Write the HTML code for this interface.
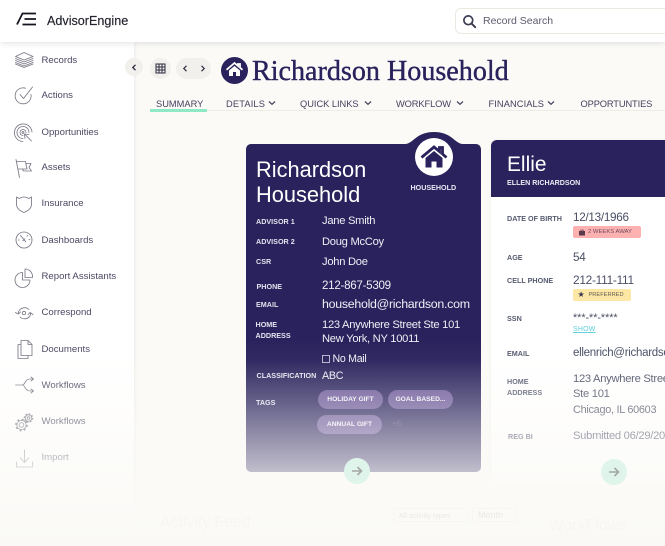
<!DOCTYPE html>
<html><head><meta charset="utf-8">
<style>
*{box-sizing:border-box;margin:0;padding:0}
html,body{width:665px;height:546px;overflow:hidden;background:#fbfaf7}
body{position:relative;font-family:"Liberation Sans",sans-serif;color:#3d3a58}
.a{position:absolute;white-space:nowrap}
.nav{position:absolute;left:41.5px;font-size:9.6px;color:#4a4862;line-height:12px;white-space:nowrap;margin-top:1px}
.ic{position:absolute;left:13px;width:22px;height:22px;fill:none;stroke:#787684;stroke-width:.85;stroke-linecap:round;stroke-linejoin:round}
.tab{position:absolute;top:98px;font-size:9.3px;line-height:12px;color:#44425e;white-space:nowrap}
.ch{position:absolute;top:100px;width:8px;height:6px;fill:none;stroke:#44425e;stroke-width:1.2}
.l{position:absolute;font-size:7.2px;font-weight:bold;line-height:11px;white-space:nowrap;color:#e4e2ee}
.v{position:absolute;font-size:11.2px;letter-spacing:-.28px;line-height:14px;white-space:nowrap;color:#efeef5}
.pill{position:absolute;height:19px;border-radius:10px;background:#6a5798;color:#f2f0f7;font-size:6.7px;font-weight:bold;line-height:19px;text-align:center;white-space:nowrap}
.l2{position:absolute;font-size:7.2px;font-weight:bold;line-height:11px;white-space:nowrap;color:#565a70}
.v2{position:absolute;font-size:11.2px;letter-spacing:-.28px;line-height:15px;white-space:nowrap;color:#4b4f66}
</style></head><body>

<!-- top bar -->
<div class="a" style="left:0;top:0;width:665px;height:42px;background:#fff;box-shadow:0 1px 6px rgba(40,40,60,.14);z-index:3"></div>
<!-- sidebar -->
<div class="a" style="left:0;top:42px;width:134px;height:504px;background:#fff;box-shadow:1px 0 3px rgba(40,40,60,.07)"></div>

<div class="a" style="z-index:4;left:0;top:0;width:665px;height:42px">
<svg class="a" style="left:16px;top:12px" width="21" height="14" viewBox="0 0 21 14"><path d="M1 12.5 6.5 1.5H9" fill="none" stroke="#15151f" stroke-width="1.8"/><path d="M9 1.5H20M8.5 7H20M6.5 12.5H20" fill="none" stroke="#15151f" stroke-width="1.7"/></svg>
<div class="a" style="left:47px;top:12.500px;font-size:12.600px;line-height:16px;color:#23232f;-webkit-text-stroke:.15px #23232f">AdvisorEngine</div>
<div class="a" style="left:455px;top:8px;width:230px;height:26px;border:1px solid #ece9e3;border-radius:6px;background:#fff"></div>
<svg class="a" style="left:462px;top:14px" width="15" height="15" viewBox="0 0 15 15"><circle cx="6.3" cy="6.3" r="4.4" fill="none" stroke="#3b3d52" stroke-width="1.7"/><path d="M9.6 9.6 13.2 13.2" stroke="#3b3d52" stroke-width="2" stroke-linecap="round"/></svg>
<div class="a" style="left:483px;top:14px;font-size:10.500px;line-height:14px;color:#5d5b6f">Record Search</div>
</div>

<!-- sidebar items -->
<svg class="ic" style="top:49px" viewBox="0 0 22 22"><path d="M11 3.5 20 7.5 11 11 2.5 7.5ZM2.5 9.5 11 13l9-3.500M2.500 11.500 11 15l9-3.500M2.500 13.500 11 17l9-3.500M2.500 15 11 18.500l9-3.500"/></svg>
<div class="nav" style="top:54px">Records</div>
<svg class="ic" style="top:84px" viewBox="0 0 22 22"><path d="M18 10.500A8 8 0 1 1 12.500 4.200"/><path d="M7 10.500 10.500 14.500 19.500 3"/></svg>
<div class="nav" style="top:89px">Actions</div>
<svg class="ic" style="top:122px" viewBox="0 0 22 22"><path d="M10 19.500A8.800 8.800 0 1 1 19 10M10 16.500A6 6 0 1 1 16 10.500M10 13.500A3 3 0 1 1 13 10.500"/><circle cx="10" cy="10.500" r=".9"/><path d="M11.500 12 18.500 19M11.500 12 16 12.500M11.500 12 12 16.500"/></svg>
<div class="nav" style="top:126px">Opportunities</div>
<svg class="ic" style="top:157px" viewBox="0 0 22 22"><path d="M3 2.500 6.500 20.500M3.500 4.500H12.500L14 12H5M12.800 6.500H18L16 10.500 18.500 14H10.500L9.500 12"/></svg>
<div class="nav" style="top:161px">Assets</div>
<svg class="ic" style="top:193px" viewBox="0 0 22 22"><path d="M3.500 4 6 5.500 8.500 4.500Q11 3.500 13.500 4.500L16 5.500 18.500 4V11C18.500 15.500 15 18 11 19.500 7 18 3.500 15.500 3.500 11Z"/></svg>
<div class="nav" style="top:197px">Insurance</div>
<svg class="ic" style="top:229px" viewBox="0 0 22 22"><circle cx="11" cy="11" r="8"/><path d="M7.500 6.500 12.800 12.800M9.800 11.800 11.800 9.800M5.200 11H6.200M16 10.500H17M14.500 6.500 14 7.200"/></svg>
<div class="nav" style="top:234px">Dashboards</div>
<svg class="ic" style="top:266px" viewBox="0 0 22 22"><path d="M9.500 6.500A7.500 7.500 0 1 0 17 14H9.500Z"/><path d="M12 3A7.500 7.500 0 0 1 19.500 10.500V11.500H12Z"/></svg>
<div class="nav" style="top:270px">Report Assistants</div>
<svg class="ic" style="top:302px" viewBox="0 0 22 22"><circle cx="11" cy="11" r="1.700"/><path d="M5.500 11A6 5 0 0 1 16 7.500M17.500 11A6 5 0 0 1 7 15M2.500 10.500 5.500 12 7.500 10M15 12.500 17 10.500 20 12.500"/></svg>
<div class="nav" style="top:306px">Correspond</div>
<svg class="ic" style="top:338px" viewBox="0 0 22 22"><path d="M8 2.500H15L19 6.500V17.500H8ZM15 2.500V6.500H19M8 6.500H5V20.500H15V17.500"/></svg>
<div class="nav" style="top:342.500px">Documents</div>
<svg class="ic" style="top:374px" viewBox="0 0 22 22"><path d="M2.500 11H9.500C12 11 12 5 17 5H20M9.500 11C12 11 12 17 17 17H20M18 3 20.500 5 18 7M18 15 20.500 17 18 19"/></svg>
<div class="nav" style="top:378.500px">Workflows</div>
<svg class="ic" style="top:411px" viewBox="0 0 22 22"><circle cx="8.500" cy="14" r="2.300"/><circle cx="8.500" cy="14" r="4.600"/><circle cx="8.500" cy="14" r="5.600" stroke-width="1.600" stroke-linecap="butt" stroke-dasharray="2 2.400"/><circle cx="15.500" cy="7" r="1.300"/><circle cx="15.500" cy="7" r="3.200"/><circle cx="15.500" cy="7" r="4.100" stroke-width="1.400" stroke-linecap="butt" stroke-dasharray="1.600 1.620"/></svg>
<div class="nav" style="top:415px">Workflows</div>
<svg class="ic" style="top:447px" viewBox="0 0 22 22"><path d="M11.500 3V15M7.500 11 11.500 15.500 15.500 11M3.500 15V20H19.500V15"/></svg>
<div class="nav" style="top:451px">Import</div>

<!-- toolbar -->
<div class="a" style="left:125px;top:58px;width:18px;height:18px;border-radius:50%;background:#f1f0ec"></div>
<svg class="a" style="left:131px;top:64px" width="6" height="7" viewBox="0 0 6 7"><path d="M4.500 .8 1.800 3.500 4.500 6.200" fill="none" stroke="#2d2b40" stroke-width="1.300"/></svg>
<div class="a" style="left:150px;top:58px;width:21px;height:21px;border-radius:50%;background:#f1f0ec"></div>
<svg class="a" style="left:155px;top:63px" width="11" height="11" viewBox="0 0 11 11"><path d="M1 1H10V10H1ZM1 4H10M1 7H10M4 1V10M7 1V10" fill="none" stroke="#2d2b40" stroke-width="1"/></svg>
<div class="a" style="left:176px;top:58px;width:35px;height:21px;border-radius:11px;background:#f1f0ec"></div>
<svg class="a" style="left:182px;top:65px" width="6" height="7" viewBox="0 0 6 7"><path d="M4.500 .8 1.800 3.500 4.500 6.200" fill="none" stroke="#2d2b40" stroke-width="1.200"/></svg>
<svg class="a" style="left:200px;top:65px" width="6" height="7" viewBox="0 0 6 7"><path d="M1.500 .8 4.200 3.500 1.500 6.200" fill="none" stroke="#2d2b40" stroke-width="1.200"/></svg>

<!-- title -->
<div class="a" style="left:221px;top:57px;width:27px;height:27px;border-radius:50%;background:#29225c"></div>
<svg class="a" style="left:225px;top:60px" width="19" height="19" viewBox="0 0 19 19"><path d="M1.500 9.800 9.500 3 13 6V4H15V7.700L17.500 9.800" fill="none" stroke="#fff" stroke-width="1.800"/><path d="M4 10.500 9.500 6 15 10.500V16H11V12H8V16H4Z" fill="#fff"/></svg>
<div class="a" style="left:252px;top:55px;font-family:'Liberation Serif',serif;font-size:28.100px;line-height:34px;color:#29225c;-webkit-text-stroke:.4px #29225c">Richardson Household</div>

<!-- tabs -->
<div class="a" style="left:150px;top:110px;width:515px;height:1px;background:#eeece7"></div>
<div class="a" style="left:150px;top:109px;width:57px;height:3px;background:#8fe8c6"></div>
<div class="tab" style="left:156px">SUMMARY</div>
<div class="tab" style="left:226px;letter-spacing:.15px">DETAILS</div>
<svg class="ch" style="left:268px" viewBox="0 0 8 6"><path d="M1 1.500 4 4.300 7 1.500"/></svg>
<div class="tab" style="left:300px;letter-spacing:-.03px">QUICK LINKS</div>
<svg class="ch" style="left:364px" viewBox="0 0 8 6"><path d="M1 1.500 4 4.300 7 1.500"/></svg>
<div class="tab" style="left:396px;letter-spacing:-.1px">WORKFLOW</div>
<svg class="ch" style="left:456px" viewBox="0 0 8 6"><path d="M1 1.500 4 4.300 7 1.500"/></svg>
<div class="tab" style="left:488.500px;letter-spacing:.08px">FINANCIALS</div>
<svg class="ch" style="left:547px" viewBox="0 0 8 6"><path d="M1 1.500 4 4.300 7 1.500"/></svg>
<div class="tab" style="left:580.500px;letter-spacing:-.12px">OPPORTUNTIES</div>

<!-- household card -->
<svg class="a" style="left:246px;top:131px" width="235" height="341" viewBox="0 0 235 341"><path d="M5 13H159C167 13 170 1 188 1S209 13 217 13H230A5 5 0 0 1 235 18V336A5 5 0 0 1 230 341H5A5 5 0 0 1 0 336V18A5 5 0 0 1 5 13Z" fill="#29225c"/></svg>
<div class="a" style="left:415px;top:138px;width:38px;height:38px;border-radius:50%;background:#fff"></div>
<svg class="a" style="left:420px;top:144px" width="28" height="25" viewBox="0 0 28 25"><path d="M1.500 13.500 14 3 19.500 7.500V3.500H22.500V10L26.500 13.500" fill="none" stroke="#29225c" stroke-width="2.800"/><path d="M5.500 14 14 7 22.500 14V23.500H16.500V17.500H11.500V23.500H5.500Z" fill="#29225c"/></svg>
<div class="a" style="left:410.500px;top:182.500px;font-size:7.150px;font-weight:bold;line-height:11px;color:#e9e7f2">HOUSEHOLD</div>
<div class="a" style="left:256px;top:156.500px;font-size:21.800px;line-height:25px;color:#fff;white-space:normal;width:140px">Richardson Household</div>

<div class="l" style="left:256px;top:216px">ADVISOR 1</div><div class="v" style="left:322px;top:214px">Jane Smith</div>
<div class="l" style="left:256px;top:236px">ADVISOR 2</div><div class="v" style="left:322px;top:234.500px">Doug McCoy</div>
<div class="l" style="left:256px;top:256px">CSR</div><div class="v" style="left:322px;top:255px">John Doe</div>
<div class="l" style="left:256.500px;top:280.500px">PHONE</div><div class="v" style="left:322px;top:278.500px;font-size:11.600px">212-867-5309</div>
<div class="l" style="left:256px;top:299px">EMAIL</div><div class="v" style="left:322px;top:297px;font-size:12.400px">household@richardson.com</div>
<div class="l" style="left:255.500px;top:319px;line-height:11px;white-space:normal;width:50px">HOME ADDRESS</div>
<div class="v" style="left:322px;top:318px">123 Anywhere Street Ste 101</div>
<div class="v" style="left:322px;top:332px">New York, NY 10011</div>
<div class="a" style="left:322px;top:354.500px;width:8px;height:8px;border:1px solid #b6b3cb"></div>
<div class="v" style="left:332.500px;top:352px;font-size:10.600px">No Mail</div>
<div class="l" style="left:256.500px;top:370px">CLASSIFICATION</div><div class="v" style="left:322px;top:368.500px;font-size:10.700px">ABC</div>
<div class="l" style="left:256px;top:397px">TAGS</div>
<div class="pill" style="left:318px;top:389.500px;width:65px">HOLIDAY GIFT</div>
<div class="pill" style="left:388px;top:389.500px;width:65px">GOAL BASED...</div>
<div class="pill" style="left:317px;top:414.500px;width:65px">ANNUAL GIFT</div>
<div class="a" style="left:392px;top:418px;font-size:8px;line-height:11px;color:#4c4778">+6</div>

<!-- Ellie card -->
<div class="a" style="left:491px;top:140px;width:200px;height:345px;background:#fff;border-radius:6px;box-shadow:0 0 4px rgba(40,40,60,.05)"></div>
<div class="a" style="left:491px;top:140px;width:200px;height:57px;background:#29225c;border-radius:6px 6px 0 0"></div>
<div class="a" style="left:507px;top:151.500px;font-size:20.900px;line-height:26px;color:#fff">Ellie</div>
<div class="a" style="left:507px;top:178px;font-size:7.100px;font-weight:bold;line-height:11px;color:#eceaf3">ELLEN RICHARDSON</div>

<div class="l2" style="left:507px;top:213px">DATE OF BIRTH</div><div class="v2" style="left:573px;top:210px;font-size:11.700px">12/13/1966</div>
<div class="a" style="left:573px;top:226px;width:68px;height:12px;background:#feb1b1;border-radius:2px"></div>
<svg class="a" style="left:578px;top:228px" width="8" height="8" viewBox="0 0 8 8"><path d="M1 3H7V7.500H1ZM2.500 3V1.500H3.500V3M4.500 3V1.500H5.500V3" fill="#5a3a4a"/></svg>
<div class="a" style="left:588px;top:226.500px;font-size:5.900px;line-height:11px;color:#6e4b58">2 WEEKS AWAY</div>

<div class="l2" style="left:507px;top:252px">AGE</div><div class="v2" style="left:573px;top:249.500px;font-size:11.700px">54</div>
<div class="l2" style="left:507px;top:275px">CELL PHONE</div><div class="v2" style="left:573px;top:273px;font-size:11.900px">212-111-111</div>
<div class="a" style="left:573px;top:289px;width:58px;height:12px;background:#fde7a4;border-radius:2px"></div>
<div class="a" style="left:577.500px;top:289px;font-size:8px;line-height:12px;color:#353350">★</div>
<div class="a" style="left:588.500px;top:289.500px;font-size:5.700px;line-height:11px;color:#655f55">PREFERRED</div>

<div class="l2" style="left:507px;top:313px">SSN</div><div class="a" style="left:573px;top:312px;font-size:10.700px;line-height:12px;color:#4b4f66">***-**-****</div>
<div class="a" style="left:573px;top:324px;font-size:7px;letter-spacing:.2px;line-height:11px;color:#5fd0dc;text-decoration:underline">SHOW</div>

<div class="l2" style="left:507px;top:348px">EMAIL</div><div class="v2" style="left:573px;top:345.500px;font-size:11.500px">ellenrich@richardson.com</div>
<div class="l2" style="left:507px;top:375.500px">HOME</div><div class="l2" style="left:507px;top:386.500px">ADDRESS</div>
<div class="v2" style="left:573px;top:371.500px">123 Anywhere Street</div>
<div class="v2" style="left:573px;top:387px">Ste 101</div>
<div class="v2" style="left:573px;top:402.500px;font-size:10.900px">Chicago, IL 60603</div>
<div class="l2" style="left:508px;top:431px">REG BI</div><div class="v2" style="left:573px;top:428.500px">Submitted 06/29/2020</div>

<!-- fade overlay -->
<div class="a" style="left:0;top:340px;width:665px;height:206px;z-index:5;background:linear-gradient(to bottom,rgba(251,250,247,0) 0,rgba(251,250,247,.04) 20px,rgba(251,250,247,.28) 60px,rgba(251,250,247,.47) 90px,rgba(251,250,247,.72) 132px,rgba(251,250,247,.93) 170px,rgba(250,249,246,1) 206px)"></div>

<!-- arrow buttons above fade -->
<div class="a" style="left:344px;top:458px;width:26px;height:26px;border-radius:50%;background:#dff5ec;z-index:6"></div>
<svg class="a" style="left:351px;top:465px;z-index:6" width="12" height="12" viewBox="0 0 12 12"><path d="M1 6H10.500M6.500 2 10.500 6 6.500 10" fill="none" stroke="#a5a7a6" stroke-width="1.600"/></svg>
<div class="a" style="left:601px;top:459px;width:26px;height:26px;border-radius:50%;background:#dff5ec;z-index:6"></div>
<svg class="a" style="left:608px;top:466px;z-index:6" width="12" height="12" viewBox="0 0 12 12"><path d="M1 6H10.500M6.500 2 10.500 6 6.500 10" fill="none" stroke="#a5a7a6" stroke-width="1.600"/></svg>

<!-- faint text at bottom -->
<div class="a" style="z-index:6;left:160px;top:514px;font-size:15.800px;line-height:18px;color:#f7f6f2">Activity Feed</div>
<div class="a" style="z-index:6;left:393px;top:508px;width:75px;height:14px;border:1px solid #f7f6f2;border-radius:2px"></div>
<div class="a" style="z-index:6;left:472px;top:508px;width:45px;height:14px;border:1px solid #f7f6f2;border-radius:2px"></div>
<div class="a" style="z-index:6;left:399px;top:509.500px;font-size:7.200px;line-height:11px;color:#eceae5">All activity types</div>
<div class="a" style="z-index:6;left:478px;top:509.500px;font-size:9px;line-height:11px;color:#eceae5">Month</div>
<div class="a" style="z-index:6;left:549px;top:517px;font-size:15.800px;line-height:18px;color:#f7f6f2">WorkFlows</div>

</body></html>
